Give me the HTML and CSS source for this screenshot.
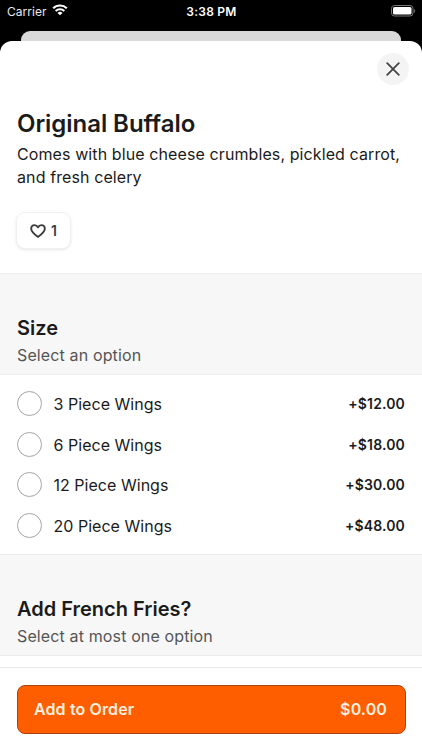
FILE: index.html
```html
<!DOCTYPE html>
<html lang="en">
<head>
<meta charset="utf-8">
<title>Original Buffalo</title>
<link rel="stylesheet" href="styles.css">
</head>
<body>
<div class="screen">
  <header class="status">
    <div class="carrier"><span>Carrier</span>
      <svg width="16" height="12" viewBox="0 0 16 12" fill="none" stroke="#fff" stroke-width="2.200"><path d="M1.200 4.300a9.700 9.700 0 0 1 13.600 0M3.700 7a6.200 6.200 0 0 1 8.600 0"/><path d="M8 11.300 5.500 9a3.500 3.500 0 0 1 5 0z" fill="#fff" stroke="none"/></svg>
    </div>
    <div class="time">3:38 PM</div>
    <svg class="battery" width="25" height="12" viewBox="0 0 25 12"><rect x=".5" y=".5" width="21.500" height="10.500" rx="3" fill="none" stroke="#777"/><rect x="2" y="2" width="18.500" height="7.500" rx="1.500" fill="#fff"/><path d="M23.200 4v4c1.300-.5 1.300-3.500 0-4z" fill="#777"/></svg>
  </header>
  <div class="back-card"></div>
  <main class="sheet">
    <section class="intro">
      <button class="close" aria-label="Close"><svg width="14" height="14" viewBox="0 0 14 14" fill="none" stroke="#444" stroke-width="1.800" stroke-linecap="round"><path d="m1.200 1.200 11.600 11.600M12.800 1.200 1.200 12.800"/></svg></button>
      <h1>Original Buffalo</h1>
      <p>Comes with blue cheese crumbles, pickled carrot,<br>and fresh celery</p>
      <button class="like"><svg width="16" height="14" viewBox="0 0 16 14" fill="none" stroke="#3d3d3d" stroke-width="1.900" stroke-linejoin="round"><path d="M8 12.900C5.700 11.200 1.200 8.200 1.200 4.800 1.200 2.600 2.700 1.100 4.600 1.100 6.200 1.100 7.300 2 8 3.300 8.700 2 9.800 1.100 11.400 1.100c1.900 0 3.400 1.500 3.400 3.700 0 3.400-4.500 6.400-6.800 8.100z"/></svg><span>1</span></button>
    </section>
    <section class="group-head"><h2>Size</h2><p>Select an option</p></section>
    <section class="options">
      <label class="option"><i class="radio"></i><span class="name">3 Piece Wings</span><b>+$12.00</b></label>
      <label class="option"><i class="radio"></i><span class="name">6 Piece Wings</span><b>+$18.00</b></label>
      <label class="option"><i class="radio"></i><span class="name">12 Piece Wings</span><b>+$30.00</b></label>
      <label class="option"><i class="radio"></i><span class="name">20 Piece Wings</span><b>+$48.00</b></label>
    </section>
    <section class="group-head"><h2>Add French Fries?</h2><p>Select at most one option</p></section>
    <div class="peek"></div>
    <footer class="footer"><button class="order"><span>Add to Order</span><span>$0.00</span></button></footer>
  </main>
</div>
</body>
</html>
```
FILE: styles.css
```css
* { box-sizing: border-box; }
body, h1, h2, p { margin: 0; }
body { background: #000; font-family: Inter, sans-serif; color: #1b1b1b; }
button { font: inherit; border: 0; padding: 0; }
svg { display: block; flex: none; }
.screen { width: 422px; height: 750px; overflow: hidden; display: flex; flex-direction: column; }
.status { height: 31px; flex: none; padding: 0 6px 9px 7px; display: grid; grid-template-columns: 1fr auto 1fr; align-items: center; color: #fff; font-size: 12px; }
.carrier { display: flex; align-items: center; gap: 5px; letter-spacing: .05px; color: #e8e8e8; }
.carrier svg { margin-top: -2px; }
.time { font-weight: 600; letter-spacing: .25px; }
.battery { justify-self: end; margin-top: -1px; }
.back-card { height: 10px; flex: none; margin: 0 21px; background: #d9d9d9; border-radius: 9px 9px 0 0; }
.sheet { flex: 1; background: #fff; border-radius: 12px 12px 0 0; overflow: hidden; display: flex; flex-direction: column; }
.intro { height: 232px; flex: none; padding: 12px 13px 0 17px; display: flex; flex-direction: column; align-items: flex-start; }
.close { align-self: flex-end; width: 32px; height: 32px; flex: none; border-radius: 50%; background: #f4f4f4; display: grid; place-items: center; }
h1 { margin-top: 23px; font-size: 24px; line-height: 32px; font-weight: 600; letter-spacing: -.05px; }
.intro p { margin-top: 3px; font-size: 16px; line-height: 22.500px; letter-spacing: .1px; white-space: nowrap; }
.like { width: 53px; height: 35px; margin-top: 25px; border-radius: 8px; background: #fff; box-shadow: 0 0 0 1px #f1f1f1, 0 1px 3px 1px #0000001a; display: flex; align-items: center; justify-content: center; gap: 5px; font-size: 14px; font-weight: 600; color: #3d3d3d; }
.group-head { height: 102px; flex: none; padding: 41px 17px 0; background: #f7f7f7; border: solid #ececec; border-width: 1px 0; }
h2 { font-size: 20px; line-height: 27px; font-weight: 600; letter-spacing: 0; }
.group-head p { margin-top: 2px; font-size: 16px; line-height: 22px; color: #555; letter-spacing: .13px; }
.options { height: 179px; flex: none; padding-top: 8px; }
.option { height: 40.700px; padding: 0 17px 0 16.500px; display: flex; align-items: center; }
.radio { width: 25px; height: 25px; border: 1px solid #a5a5a5; border-radius: 50%; }
.name { flex: 1; margin-left: 12px; padding-top: 1px; font-size: 16px; letter-spacing: .03px; }
.option b { font-size: 14px; font-weight: 600; letter-spacing: .15px; }
.peek { height: 11px; flex: none; }
.footer { flex: 1; padding: 17px 16.500px 0; border-top: 1px solid #e9e9e9; background: #fff; }
.order { width: 100%; height: 49px; padding: 0 17.500px 2px 16.500px; border: 1px solid #a9440f; border-radius: 8px; background: #ff5e00; color: #fff0df; display: flex; align-items: center; justify-content: space-between; font-size: 16px; font-weight: 600; letter-spacing: .12px; }
```
